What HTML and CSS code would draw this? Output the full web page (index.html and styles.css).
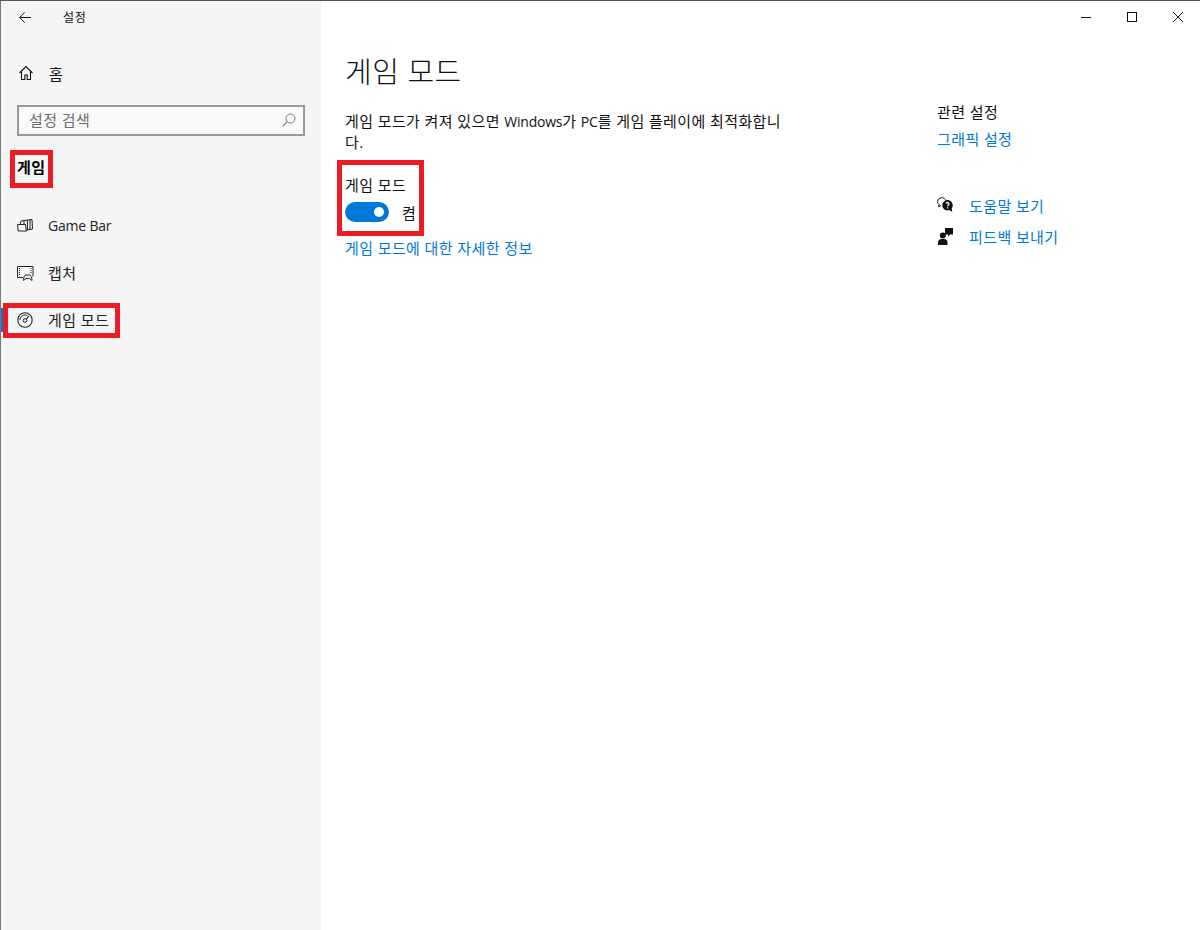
FILE: index.html
```html
<!DOCTYPE html>
<html lang="ko">
<head>
    <meta charset="UTF-8">
    <meta name="viewport" content="width=device-width, initial-scale=1.0">
    <title>설정</title>
    <link rel="stylesheet" href="styles.css">
</head>
<body>
    <div class="window">
        <aside class="sidebar">
            <div class="titlebar">
                <svg class="back-icon" width="12" height="11" viewBox="0 0 12 11"><path d="M5.700 .4.700 5.500l5 5.100M.7 5.500H12" fill="none" stroke="#111" stroke-width="1"/></svg>
                <span class="app-title">설정</span>
            </div>
            <div class="home-item">
                <svg class="nav-icon" width="16" height="16" viewBox="0 0 16 16"><path d="M1.500 8 8 1.500 14.500 8M3.500 6.500v8h3.300v-4.500h2.400v4.500h3.300v-8" fill="none" stroke="#111" stroke-width="1.100"/></svg>
                <span class="home-label">홈</span>
            </div>
            <div class="search-box">
                <span class="search-text">설정 검색</span>
                <svg width="14" height="14" viewBox="0 0 14 14"><circle cx="8.500" cy="5.500" r="4.500" fill="none" stroke="#777" stroke-width="1"/><path d="M5.300 8.700.7 13.300" stroke="#777" stroke-width="1.100"/></svg>
            </div>
            <h2 class="group-title">게임</h2>
            <nav class="nav-list">
                <div class="nav-item">
                    <svg class="nav-icon" width="16" height="14" viewBox="0 0 16 14"><path d="M.5 5.500h8l.8 6.500H1.200zM3 5.500 4 2l11-1.500.5 9.500-6 1M7 1.600v3.900M10.500 1.100v9.700M13 .8v9.500" fill="none" stroke="#222" stroke-width="1"/></svg>
                    <span class="latin">Game Bar</span>
                </div>
                <div class="nav-item">
                    <svg class="nav-icon" width="17" height="16" viewBox="0 0 17 16"><path d="M6 12.500H.5v-11h15.500v10" fill="none" stroke="#222" stroke-width="1"/><path d="M2.500 3v8M14 3v6" stroke="#222" stroke-width="1" stroke-dasharray="1 1"/><path d="M6.500 15.500c0-3 1-5.500 2.500-5.500h3.500c1.500 0 2.500 2.500 2.500 5.500l-2.500-2h-3.500z" fill="none" stroke="#222" stroke-width="1"/></svg>
                    <span>캡처</span>
                </div>
                <div class="nav-item active">
                    <svg class="nav-icon" width="16" height="16" viewBox="0 0 16 16"><circle cx="8" cy="8" r="7.200" fill="none" stroke="#222" stroke-width="1.100"/><path d="M3 8a5 5 0 0 1 7.500-4.300" fill="none" stroke="#222" stroke-width="1"/><circle cx="8" cy="8.500" r="1.800" fill="none" stroke="#222" stroke-width="1"/><path d="m9.200 7.200 2.600-3" stroke="#222" stroke-width="1.100"/></svg>
                    <span>게임 모드</span>
                </div>
            </nav>
        </aside>

        <main class="content">
            <div class="window-controls">
                <svg width="10" height="10" viewBox="0 0 10 10"><path d="M0 5.500h10" stroke="#111" stroke-width="1"/></svg>
                <svg width="10" height="10" viewBox="0 0 10 10"><rect x=".5" y=".5" width="9" height="9" fill="none" stroke="#111" stroke-width="1"/></svg>
                <svg width="10" height="10" viewBox="0 0 10 10"><path d="M0 0l10 10M10 0 0 10" stroke="#111" stroke-width="1"/></svg>
            </div>
            <div class="columns">
                <section class="settings">
                    <h1 class="page-title">게임 모드</h1>
                    <p class="description">게임 모드가 켜져 있으면 <span class="latin">Windows</span>가 <span class="latin">PC</span>를 게임 플레이에 최적화합니<br>다.</p>
                    <div class="toggle-label">게임 모드</div>
                    <div class="toggle-row">
                        <div class="toggle"><div class="toggle-knob"></div></div>
                        <span>켬</span>
                    </div>
                    <a class="link">게임 모드에 대한 자세한 정보</a>
                </section>
                <section class="related">
                    <div class="related-title">관련 설정</div>
                    <a class="link">그래픽 설정</a>
                    <div class="help-list">
                        <div class="help-item">
                            <svg width="17" height="17" viewBox="0 0 17 17"><path d="M9 3.500C8.300 1.800 6.800.7 4.800.7 2.400.7.600 2.400.6 4.500c0 1.200.6 2.300 1.500 3L1.500 9.800l2.700-1.400" fill="none" stroke="#111" stroke-width="1"/><path d="M10.500 3a5.300 5.300 0 0 0-3.200 9.400c1.300 1 3.500 1.200 5 .6l3 2-.6-3.500a5.300 5.300 0 0 0-4.200-8.500z" fill="#111"/><path d="M9 6.500c.3-1.300 3-1.300 3 .4 0 1-1.400 1.100-1.400 2.300M10.600 10.200v1.200" fill="none" stroke="#fff" stroke-width="1.200"/></svg>
                            <a class="link">도움말 보기</a>
                        </div>
                        <div class="help-item">
                            <svg width="17" height="17" viewBox="0 0 17 17"><path d="M8 0h8v6.500h-3l-2 2v-2H8z" fill="#111"/><circle cx="5.800" cy="7.500" r="3" fill="#111"/><path d="M1 17v-2.500c0-2 1.600-3.500 3.500-3.500h2.600c1.900 0 3.400 1.500 3.400 3.500V17z" fill="#111"/></svg>
                            <a class="link">피드백 보내기</a>
                        </div>
                    </div>
                </section>
            </div>
        </main>

        <div class="mark mark-group"></div>
        <div class="mark mark-nav"></div>
        <div class="mark mark-toggle"></div>
    </div>
</body>
</html>
```

FILE: styles.css
```css
html, body {
    margin: 0;
    height: 100%;
    overflow: hidden;
}
body {
    font-family: "Open Sans", "Noto Sans CJK KR", sans-serif;
    font-size: 15px;
    letter-spacing: 0.4px;
    color: #111;
    background: #fff;
}
.latin {
    font-size: 14px;
    letter-spacing: -0.2px;
}
.window {
    position: relative;
    display: flex;
    height: 930px;
    box-sizing: border-box;
    border-top: 1px solid #555;
    border-left: 1px solid #777;
}
.sidebar {
    width: 320px;
    flex-shrink: 0;
    background: #f5f5f5;
}
.titlebar {
    display: flex;
    align-items: center;
    height: 32px;
    padding-left: 18px;
}
.app-title {
    margin-left: 32px;
    font-size: 12px;
    letter-spacing: 0.8px;
}
.back-icon {
    display: block;
}
.home-item {
    display: flex;
    align-items: center;
    height: 46px;
    margin-top: 17px;
    padding-left: 17px;
}
.home-label {
    margin-left: 15px;
}
.search-box {
    display: flex;
    align-items: center;
    justify-content: space-between;
    box-sizing: border-box;
    width: 288px;
    height: 31px;
    margin: 9px 0 0 16px;
    padding: 0 7px 2px 10px;
    border: 2px solid #999;
    background: #f9f9f9;
}
.search-text {
    color: #6e6e6e;
}
.group-title {
    margin: 19px 0 0 16px;
    font-size: 15px;
    font-weight: 700;
    line-height: 24px;
    color: #000;
}
.nav-list {
    margin-top: 23px;
}
.nav-item {
    position: relative;
    display: flex;
    align-items: center;
    height: 47px;
    padding-left: 16px;
    color: #222;
}
.nav-item span {
    position: absolute;
    left: 47px;
}
.nav-item.active::before {
    content: "";
    position: absolute;
    left: 0;
    top: 12px;
    width: 4px;
    height: 24px;
    background: #0078d7;
}
.content {
    flex: 1;
    min-width: 0;
}
.window-controls {
    display: flex;
    justify-content: flex-end;
    align-items: center;
    gap: 36px;
    height: 32px;
    padding-right: 17px;
}
.columns {
    display: flex;
    padding-left: 24px;
}
.settings {
    width: 592px;
}
.page-title {
    margin: 19px 0 0;
    font-size: 29px;
    font-weight: 300;
    letter-spacing: 0.5px;
    line-height: 40px;
    color: #111;
}
.description {
    margin: 19px 0 0;
    line-height: 20px;
    white-space: nowrap;
    color: #111;
}
.toggle-label {
    margin-top: 23px;
    line-height: 20px;
}
.toggle-row {
    display: flex;
    align-items: center;
    gap: 13px;
    height: 20px;
    margin-top: 7px;
}
.toggle {
    display: flex;
    justify-content: flex-end;
    align-items: center;
    box-sizing: border-box;
    width: 44px;
    height: 20px;
    padding-right: 5px;
    border-radius: 10px;
    background: #0078d7;
}
.toggle-knob {
    width: 10px;
    height: 10px;
    border-radius: 50%;
    background: #fff;
}
.link {
    display: block;
    line-height: 20px;
    color: #0078d7;
}
.settings .link {
    margin-top: 16px;
}
.related {
    padding-top: 69px;
}
.related-title {
    line-height: 20px;
}
.related .link {
    margin-top: 7px;
}
.help-list {
    margin-top: 41px;
}
.help-item {
    display: flex;
    align-items: center;
    gap: 15px;
    height: 31px;
}
.help-item .link {
    margin: 0;
}
.mark {
    position: absolute;
    box-sizing: border-box;
    border: 5px solid #ed1c24;
}
.mark-group {
    left: 9px;
    top: 149px;
    width: 43px;
    height: 38px;
}
.mark-nav {
    left: 2px;
    top: 302px;
    width: 117px;
    height: 35px;
}
.mark-toggle {
    left: 336px;
    top: 159px;
    width: 87px;
    height: 76px;
}
```
